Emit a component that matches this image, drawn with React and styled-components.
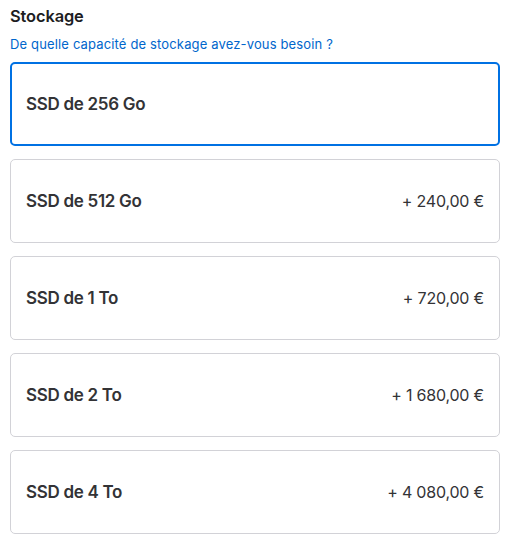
import React from "react";
import styled, { createGlobalStyle } from "styled-components";

const Global = createGlobalStyle`
  html, body { margin: 0; padding: 0; background: #fff; }
  body { font-family: Inter, "Liberation Sans", Arial, sans-serif; -webkit-font-smoothing: antialiased; }
`;

const Wrap = styled.div`
  padding: 6px 13px 0 10px;
  display: flex;
  flex-direction: column;
`;

const Title = styled.h2`
  margin: 0;
  font-size: 16.4px;
  line-height: 20px;
  font-weight: 600;
  color: #1d1d1f;
  letter-spacing: -0.1px;
`;

const Sub = styled.p`
  margin: 10px 0 0;
  font-size: 13px;
  line-height: 16px;
  color: #0066cc;
  letter-spacing: 0.15px;
`;

const List = styled.div`
  margin-top: 10px;
  display: flex;
  flex-direction: column;
  gap: 13px;
`;

const Option = styled.div`
  box-sizing: border-box;
  height: 84px;
  display: flex;
  align-items: center;
  justify-content: space-between;
  border-radius: 5px;
  border: ${(p) => (p.$selected ? "2px solid #0071e3" : "1px solid #d2d2d7")};
  padding: 0 ${(p) => (p.$selected ? "14px" : "15px")};
`;

const Label = styled.span`
  font-size: 17px;
  font-weight: 600;
  color: #333336;
  letter-spacing: -0.3px;
`;

const Price = styled.span`
  font-size: 16px;
  font-weight: 400;
  color: #333336;
  letter-spacing: -0.2px;
`;

const options = [
  { label: "SSD de 256 Go", price: "", selected: true },
  { label: "SSD de 512 Go", price: "+ 240,00 €" },
  { label: "SSD de 1 To", price: "+ 720,00 €" },
  { label: "SSD de 2 To", price: "+ 1 680,00 €" },
  { label: "SSD de 4 To", price: "+ 4 080,00 €" },
];

export default function App() {
  return (
    <>
      <Global />
      <Wrap>
        <Title>Stockage</Title>
        <Sub>De quelle capacité de stockage avez-vous besoin ?</Sub>
        <List>
          {options.map((o) => (
            <Option key={o.label} $selected={o.selected}>
              <Label>{o.label}</Label>
              {o.price && <Price>{o.price}</Price>}
            </Option>
          ))}
        </List>
      </Wrap>
    </>
  );
}
